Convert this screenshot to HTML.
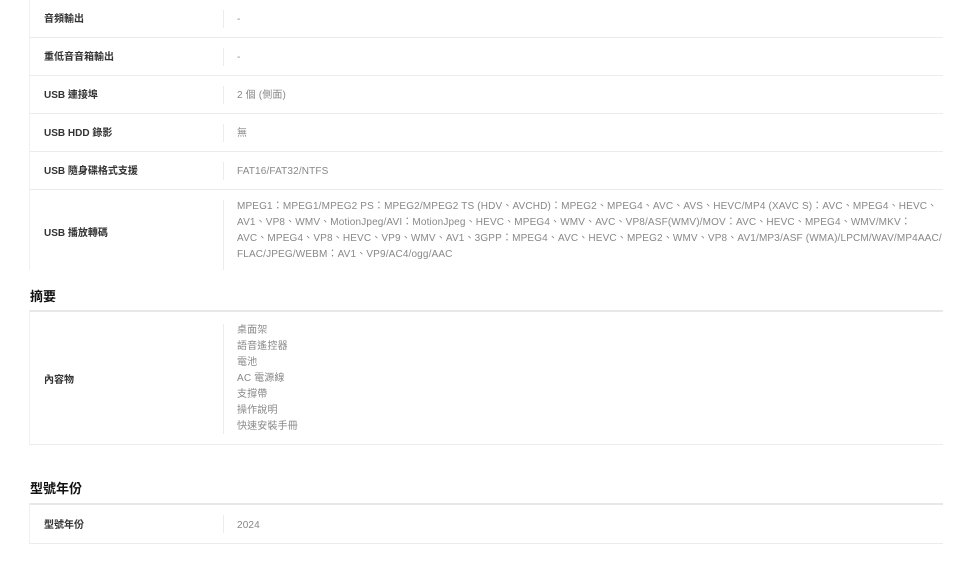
<!DOCTYPE html>
<html><head><meta charset="utf-8"><style>
*{margin:0;padding:0;box-sizing:border-box}
body{width:966px;height:568px;overflow:hidden;background:#fff;font-family:"Liberation Sans","Noto Sans CJK TC",sans-serif;position:relative}
.box{position:absolute;left:29px;width:914px;border-left:1px solid #f0f0f0;background:#fff}
.row{position:relative;border-bottom:1px solid #ececec}
.lab{position:absolute;left:14px;font-size:10px;line-height:14px;color:#333;font-weight:bold}
.div{position:absolute;left:193px;width:1px;background:#ececec}
.val{position:absolute;left:207px;font-size:10px;color:#888;line-height:16px;white-space:nowrap;letter-spacing:0.15px}
.r .lab,.r .val{top:13px;line-height:14px}
h2{position:absolute;left:30px;font-size:13px;line-height:16px;color:#111;font-weight:bold}
</style></head><body>
<div class="box" style="top:0;height:270px;overflow:hidden">
 <div class="row r" style="height:38px"><div class="lab">音頻輸出</div><div class="div" style="top:10px;height:18px"></div><div class="val">-</div></div>
 <div class="row r" style="height:38px"><div class="lab">重低音音箱輸出</div><div class="div" style="top:10px;height:18px"></div><div class="val">-</div></div>
 <div class="row r" style="height:38px"><div class="lab">USB 連接埠</div><div class="div" style="top:10px;height:18px"></div><div class="val">2 個 (側面)</div></div>
 <div class="row r" style="height:38px"><div class="lab">USB HDD 錄影</div><div class="div" style="top:10px;height:18px"></div><div class="val">無</div></div>
 <div class="row r" style="height:38px"><div class="lab">USB 隨身碟格式支援</div><div class="div" style="top:10px;height:18px"></div><div class="val">FAT16/FAT32/NTFS</div></div>
 <div class="row" style="height:90px;border:0"><div class="lab" style="top:37px">USB 播放轉碼</div><div class="div" style="top:10px;height:70px"></div><div class="val" style="top:9px">MPEG1：MPEG1/MPEG2 PS：MPEG2/MPEG2 TS (HDV、AVCHD)：MPEG2、MPEG4、AVC、AVS、HEVC/MP4 (XAVC S)：AVC、MPEG4、HEVC、<br>AV1、VP8、WMV、MotionJpeg/AVI：MotionJpeg、HEVC、MPEG4、WMV、AVC、VP8/ASF(WMV)/MOV：AVC、HEVC、MPEG4、WMV/MKV：<br>AVC、MPEG4、VP8、HEVC、VP9、WMV、AV1、3GPP：MPEG4、AVC、HEVC、MPEG2、WMV、VP8、AV1/MP3/ASF (WMA)/LPCM/WAV/MP4AAC/<br>FLAC/JPEG/WEBM：AV1、VP9/AC4/ogg/AAC</div></div>
</div>
<h2 style="top:289px">摘要</h2>
<div class="box" style="top:310px;height:135px;border-top:2px solid #e8e8e8;border-bottom:1px solid #ececec">
 <div class="lab" style="top:62px">內容物</div><div class="div" style="top:12px;height:110px"></div>
 <div class="val" style="top:11px">桌面架<br>語音遙控器<br>電池<br>AC 電源線<br>支撐帶<br>操作說明<br>快速安裝手冊</div>
</div>
<h2 style="top:481px">型號年份</h2>
<div class="box r" style="top:503px;height:41px;border-top:2px solid #e8e8e8;border-bottom:1px solid #ececec">
 <div class="lab" style="top:14px">型號年份</div><div class="div" style="top:10px;height:18px"></div><div class="val" style="top:14px;line-height:14px">2024</div>
</div>
</body></html>
